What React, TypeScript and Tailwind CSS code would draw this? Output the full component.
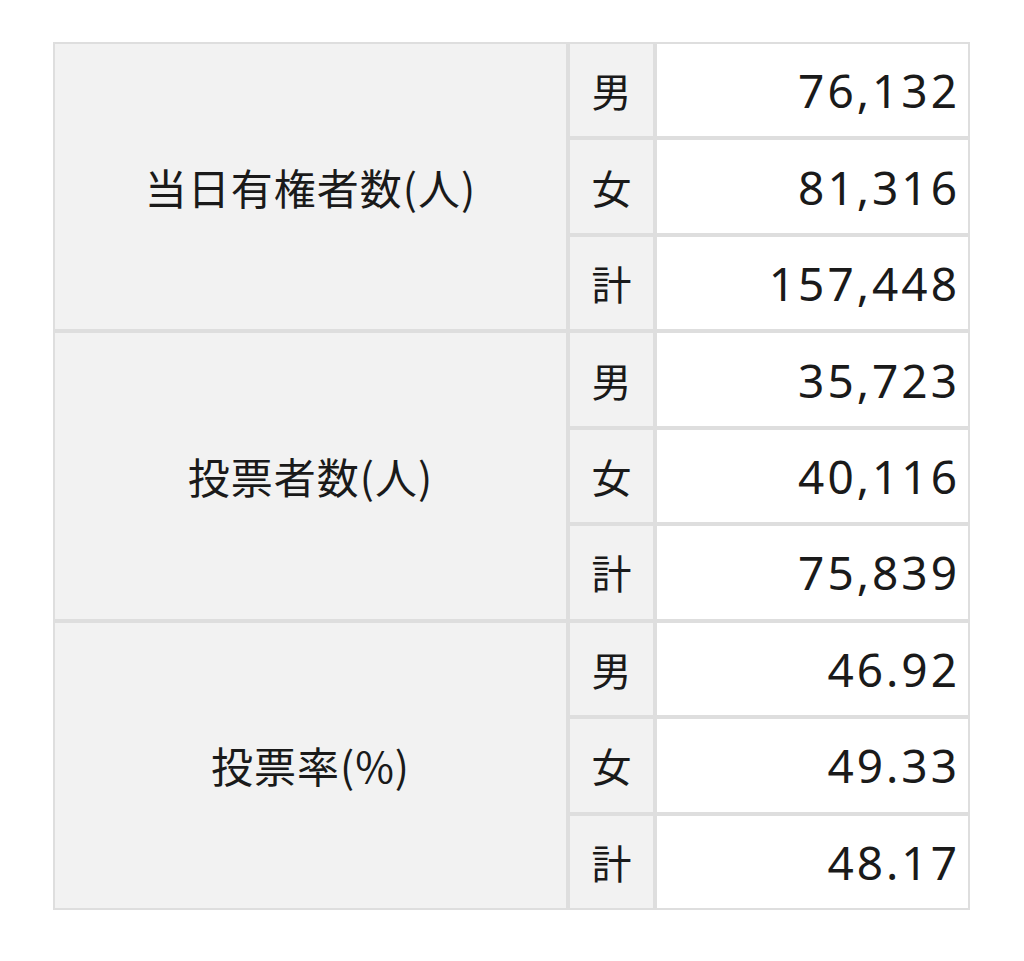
import React from "react";

const groups = [
  { label: "当日有権者数(人)", rows: [["男", "76,132"], ["女", "81,316"], ["計", "157,448"]] },
  { label: "投票者数(人)", rows: [["男", "35,723"], ["女", "40,116"], ["計", "75,839"]] },
  { label: "投票率(%)", rows: [["男", "46.92"], ["女", "49.33"], ["計", "48.17"]] },
];

export default function App() {
  return (
    <div className="w-[1024px] h-[961px] bg-white pt-[42px] pl-[53px]">
      <div className="grid grid-cols-[515px_87px_315px] grid-rows-[repeat(9,96.44px)] text-[#1a1a1a]">
        {groups.map((g, gi) => (
          <React.Fragment key={gi}>
            <div className="row-span-3 flex items-center justify-center bg-[#f2f2f2] border-2 border-[#dedede] text-[42px] leading-none tracking-[1px] font-['Noto_Sans_CJK_JP','Noto_Sans',sans-serif]">
              {g.label}
            </div>
            {g.rows.map(([k, v], ri) => (
              <React.Fragment key={ri}>
                <div className="flex items-center justify-center bg-[#f2f2f2] border-2 border-[#dedede] text-[40px] leading-none font-['Noto_Sans_CJK_JP','Noto_Sans',sans-serif]">
                  {k}
                </div>
                <div className="flex items-center justify-end bg-white border-2 border-[#dedede] pr-[8px] text-[46px] leading-none tracking-[3px] font-['Noto_Sans','Noto_Sans_CJK_JP',sans-serif]">
                  {v}
                </div>
              </React.Fragment>
            ))}
          </React.Fragment>
        ))}
      </div>
    </div>
  );
}
